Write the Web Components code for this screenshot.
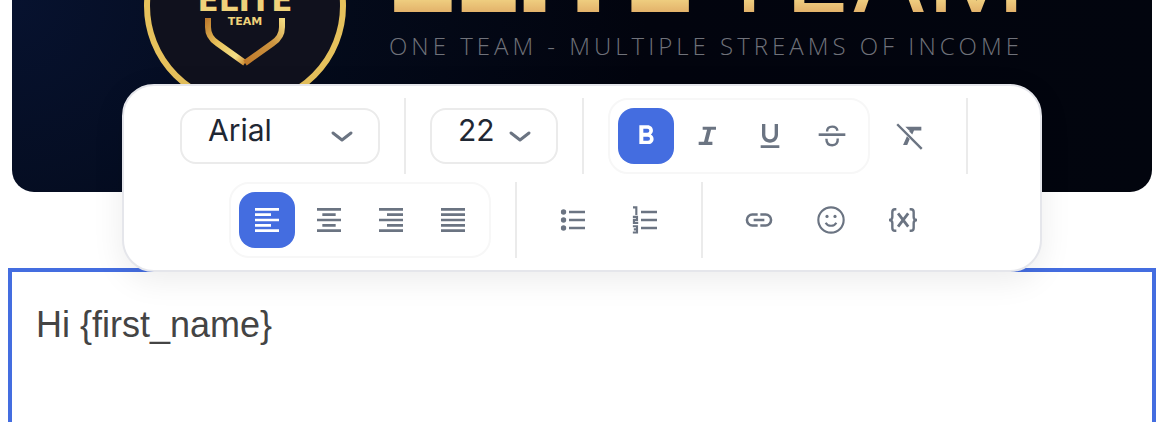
<!DOCTYPE html>
<html lang="en">
<head>
  <meta charset="utf-8">
  <title>Email editor</title>
  <style>
    body {
      margin: 0;
      height: 100vh;
      overflow: hidden;
      background: #fff;
      font-family: Inter, "Liberation Sans", sans-serif;
    }
  </style>
</head>
<body>
  <email-editor></email-editor>

  <script>
    const icons = {
      bold: '<path d="M15.6 10.8c1-.7 1.600-1.800 1.600-2.800 0-2.300-1.700-4-4-4H7v14h7c2.100 0 3.700-1.700 3.700-3.800 0-1.500-.9-2.800-2.100-3.400zM10 6.500h3a1.500 1.500 0 0 1 0 3h-3zm3.500 9H10v-3h3.500a1.500 1.500 0 0 1 0 3z"/>',
      italic: '<path d="M8 5h10v2.400h-3.700l-2.300 9h3.300v2.400H5v-2.400h4l2.300-9H8z"/>',
      underline: '<path d="M12 17c3.310 0 6-2.690 6-6V3h-2.500v8a3.500 3.500 0 0 1-7 0V3H6v8c0 3.310 2.690 6 6 6zm-7 2v2h14v-2z"/>',
      strike: '<path d="M2 10h20v2H2z"/><path class="line" d="M8.300 8.600C8.300 6.300 9.800 5 12.200 5c2 0 3.500 1.100 3.900 3.100M7.800 14c0 3 1.600 4.900 4.400 4.900s4.300-1.700 4.100-5"/>',
      clear: '<path d="M8.500 5h12v2.800H15l-1.300 3-2.200-2.200.3-.8h-.5zM9.700 12.200l2.100 2.100-1.900 4.500H6.800z"/><path class="line" d="M2.400 3.200l18.400 18.400"/>',
      left: '<path d="M3 3h18v2H3zm0 4h12v2H3zm0 4h18v2H3zm0 4h12v2H3zm0 4h18v2H3z"/>',
      center: '<path d="M3 3h18v2H3zm4 4h10v2H7zm-4 4h18v2H3zm4 4h10v2H7zm-4 4h18v2H3z"/>',
      right: '<path d="M3 3h18v2H3zm6 4h12v2H9zm-6 4h18v2H3zm6 4h12v2H9zm-6 4h18v2H3z"/>',
      justify: '<path d="M3 3h18v2H3zm0 4h18v2H3zm0 4h18v2H3zm0 4h18v2H3zm0 4h18v2H3z"/>',
      bullets: '<path d="M9 5h12v2H9zm0 6h12v2H9zm0 6h12v2H9z"/><circle cx="4.900" cy="6" r="2"/><circle cx="4.900" cy="12" r="2"/><circle cx="4.900" cy="18" r="2"/>',
      numbers: '<path d="M9 5h12v2H9zm0 6h12v2H9zm0 6h12v2H9z"/><path class="line thin" d="M3 2.500h2.500v5.800M2.900 9.700H6v2.200H3.700v2.300h3.200M2.900 16.700H6v4.700H2.900M3.600 19H6"/>',
      link: '<path d="M3.900 12A3.100 3.100 0 0 1 7 8.900h4V7H7a5 5 0 0 0 0 10h4v-1.900H7A3.100 3.100 0 0 1 3.900 12zM8 13h8v-2H8zm9-6h-4v1.900h4a3.100 3.100 0 0 1 0 6.200h-4V17h4a5 5 0 0 0 0-10z"/>',
      emoji: '<circle class="line thin" cx="12" cy="12" r="9.500"/><circle cx="9" cy="9.300" r="1.200"/><circle cx="15" cy="9.300" r="1.200"/><path class="line thin" d="M8 14c.8 1.500 2.200 2.300 4 2.300s3.200-.8 4-2.300"/>',
      variable: '<path class="line" d="M7 3.900H6c-1.400 0-2 .7-2 2.100v3.700c0 1.300-.7 2.300-2.500 2.300 1.800 0 2.500 1 2.500 2.300V18c0 1.400.6 2.100 2 2.100h1M17 3.900h1c1.400 0 2 .7 2 2.100v3.700c0 1.300.7 2.300 2.500 2.300-1.800 0-2.500 1-2.500 2.300V18c0 1.400-.6 2.100-2 2.100h-1"/><path class="line thick" d="M8.300 7l7.600 10M15.900 7L8.300 17"/>'
    }

    /**
     * Base class, fills an open shadow root with markup.
     */
    class BaseElement extends HTMLElement {
      constructor () {
        super()
        this.attachShadow({ mode: 'open' })
      }

      render (html) {
        const template = document.createElement('template')
        template.innerHTML = html
        this.shadowRoot.replaceChildren(template.content)
      }
    }

    customElements.define('tool-button',
    /**
     * Icon button. Attributes: icon, label, active.
     */
      class extends BaseElement {
        connectedCallback () {
          const active = this.hasAttribute('active')
          this.render(`
            <style>
              :host { display: block; }
              button {
                display: grid;
                place-items: center;
                width: 56px;
                height: 56px;
                padding: 0;
                border: 0;
                border-radius: 16px;
                background: none;
                color: #6b7482;
                cursor: pointer;
              }
              button[aria-pressed="true"] { background: #446de0; color: #fff; }
              svg { width: 32px; height: 32px; fill: currentColor; }
              .line { fill: none; stroke: currentColor; stroke-width: 1.8; }
              .thin { stroke-width: 1.6; }
              .thick { stroke-width: 2.1; }
            </style>
            <button type="button" aria-label="${this.getAttribute('label')}" aria-pressed="${active}">
              <svg viewBox="0 0 24 24" aria-hidden="true">${icons[this.getAttribute('icon')]}</svg>
            </button>`)
        }
      })

    customElements.define('tool-group',
    /**
     * Groups buttons, with a frame when "framed" is set.
     */
      class extends BaseElement {
        connectedCallback () {
          this.render(`
            <style>
              :host { display: flex; align-items: center; gap: 16px; padding: 0 4px; }
              :host([framed]) {
                gap: 6px;
                padding: 8px;
                border: 2px solid #f7f7f7;
                border-radius: 20px;
              }
            </style>
            <slot></slot>`)
        }
      })

    customElements.define('tool-select',
    /**
     * Drop-down with a chevron. Attributes: label, options.
     */
      class extends BaseElement {
        connectedCallback () {
          const options = this.getAttribute('options').split(',')
          this.render(`
            <style>
              :host { display: grid; height: 56px; }
              select, svg { grid-area: 1 / 1; }
              select {
                appearance: none;
                width: 100%;
                padding: 0 0 12px 26px;
                border: 2px solid #ebebeb;
                border-radius: 16px;
                background: #fff;
                color: #1f2733;
                font: 30px/40px Inter, sans-serif;
              }
              svg {
                place-self: center end;
                width: 24px;
                height: 16px;
                margin-right: 26px;
                fill: none;
                stroke: #6b7482;
                stroke-width: 3;
                stroke-linecap: round;
                stroke-linejoin: round;
                pointer-events: none;
              }
            </style>
            <select aria-label="${this.getAttribute('label')}">
              ${options.map(o => `<option>${o}</option>`).join('')}
            </select>
            <svg viewBox="0 0 24 16" aria-hidden="true"><path d="M3 5l9 7 9-7"/></svg>`)
        }
      })

    customElements.define('text-toolbar',
    /**
     * Floating formatting toolbar.
     */
      class extends BaseElement {
        connectedCallback () {
          this.render(`
            <style>
              :host {
                display: flex;
                flex-direction: column;
                gap: 8px;
                box-sizing: border-box;
                padding: 12px;
                border: 2px solid #e5e6eb;
                border-radius: 32px;
                background: #fff;
                box-shadow: 0 8px 32px rgba(0, 0, 0, 0.08);
              }
              .row { display: flex; justify-content: center; align-items: center; gap: 24px; }
              .text-row { padding-right: 16px; }
              .style { display: flex; align-items: center; gap: 8px; }
              .divider { align-self: stretch; width: 2px; background: #ebebeb; }
              .font { width: 200px; }
              .size { width: 128px; }
            </style>
            <div class="row text-row">
              <tool-select class="font" label="Font" options="Arial,Georgia,Verdana"></tool-select>
              <div class="divider"></div>
              <tool-select class="size" label="Font size" options="22,24,28"></tool-select>
              <div class="divider"></div>
              <div class="style">
                <tool-group framed>
                  <tool-button icon="bold" label="Bold" active></tool-button>
                  <tool-button icon="italic" label="Italic"></tool-button>
                  <tool-button icon="underline" label="Underline"></tool-button>
                  <tool-button icon="strike" label="Strikethrough"></tool-button>
                </tool-group>
                <tool-group>
                  <tool-button icon="clear" label="Clear formatting"></tool-button>
                </tool-group>
              </div>
              <div class="divider"></div>
            </div>
            <div class="row">
              <tool-group framed>
                <tool-button icon="left" label="Align left" active></tool-button>
                <tool-button icon="center" label="Align center"></tool-button>
                <tool-button icon="right" label="Align right"></tool-button>
                <tool-button icon="justify" label="Justify"></tool-button>
              </tool-group>
              <div class="divider"></div>
              <tool-group>
                <tool-button icon="bullets" label="Bulleted list"></tool-button>
                <tool-button icon="numbers" label="Numbered list"></tool-button>
              </tool-group>
              <div class="divider"></div>
              <tool-group>
                <tool-button icon="link" label="Link"></tool-button>
                <tool-button icon="emoji" label="Emoji"></tool-button>
                <tool-button icon="variable" label="Variable"></tool-button>
              </tool-group>
            </div>`)
        }
      })

    customElements.define('team-banner',
    /**
     * Header banner. Its content sits on the bottom edge and is cut off at the top.
     */
      class extends BaseElement {
        connectedCallback () {
          this.render(`
            <style>
              :host {
                display: flex;
                align-items: flex-end;
                gap: 42px;
                box-sizing: border-box;
                height: 192px;
                padding: 0 0 84px 131px;
                overflow: hidden;
                border-radius: 0 0 22px 22px;
                background: radial-gradient(circle at 0 0, #07122f, #040b1c 25%, #02040e 55%, #02050e);
              }
              svg { flex: none; width: 204px; height: 204px; }
              .badge-text { font-family: "DejaVu Sans", sans-serif; font-weight: 700; text-anchor: middle; fill: #efd27a; }
              .title {
                display: flex;
                gap: 20px;
                margin: 0;
                font: 900 110px/120px Inter, sans-serif;
                white-space: nowrap;
                color: transparent;
                background: linear-gradient(#f6df8c, #f0d182 72%, #e2b069 84%);
                background-clip: text;
                -webkit-background-clip: text;
              }
              .light { font-weight: 400; }
              .tagline {
                margin: 0;
                padding-bottom: 48px;
                font: 300 24px/28px "Open Sans", sans-serif;
                letter-spacing: 4px;
                white-space: nowrap;
                color: #70727a;
              }
            </style>
            <svg viewBox="0 0 204 204" role="img" aria-label="Elite Team logo">
              <defs>
                <linearGradient id="side" x1="0" y1="0" x2="1" y2="1">
                  <stop offset="0" stop-color="#bd7b2e"/>
                  <stop offset=".4" stop-color="#e8c159"/>
                  <stop offset=".8" stop-color="#f3df88"/>
                  <stop offset="1" stop-color="#cf8e36"/>
                </linearGradient>
                <linearGradient id="edge" x1="0" y1="1" x2="1" y2="0">
                  <stop offset="0" stop-color="#c07a2b"/>
                  <stop offset=".6" stop-color="#cc9440"/>
                  <stop offset="1" stop-color="#f3dc81"/>
                </linearGradient>
              </defs>
              <circle cx="102" cy="102" r="98" fill="#10111d" stroke="#e6c15c" stroke-width="6"/>
              <text class="badge-text" x="102" y="107" font-size="31">ELITE</text>
              <text class="badge-text" x="102" y="121" font-size="11">TEAM</text>
              <path d="M65 114v9c0 7 3 12 9 16l28 20" fill="none" stroke="url(#side)" stroke-width="6"/>
              <path d="M139 114v9c0 7-3 12-9 16l-28 20" fill="none" stroke="url(#edge)" stroke-width="6"/>
            </svg>
            <div class="words">
              <h1 class="title"><span>ELITE</span><span class="light">TEAM</span></h1>
              <p class="tagline">ONE TEAM - MULTIPLE STREAMS OF INCOME</p>
            </div>`)
        }
      })

    customElements.define('text-block',
    /**
     * Selected text block of the email.
     */
      class extends BaseElement {
        connectedCallback () {
          this.render(`
            <style>
              :host { display: flex; border: 4px solid #446de0; border-bottom: 0; }
              textarea {
                flex: 1;
                padding: 32px 24px;
                border: 0;
                outline: 0;
                resize: none;
                background: none;
                color: #444;
                font: 36px/42px "Liberation Sans", Arial, sans-serif;
              }
            </style>
            <textarea aria-label="Email text">Hi {first_name}</textarea>`)
        }
      })

    customElements.define('email-editor',
    /**
     * The page: banner, text block and the toolbar floating over both.
     */
      class extends BaseElement {
        connectedCallback () {
          this.render(`
            <style>
              :host {
                position: relative;
                display: flex;
                flex-direction: column;
                gap: 76px;
                height: 100%;
                margin: 0 10px 0 8px;
              }
              team-banner { flex: none; margin: 0 4px; }
              text-block { flex: 1; }
              text-toolbar { position: absolute; top: 84px; left: 114px; right: 114px; }
            </style>
            <team-banner></team-banner>
            <text-block></text-block>
            <text-toolbar></text-toolbar>`)
        }
      })
  </script>
</body>
</html>
